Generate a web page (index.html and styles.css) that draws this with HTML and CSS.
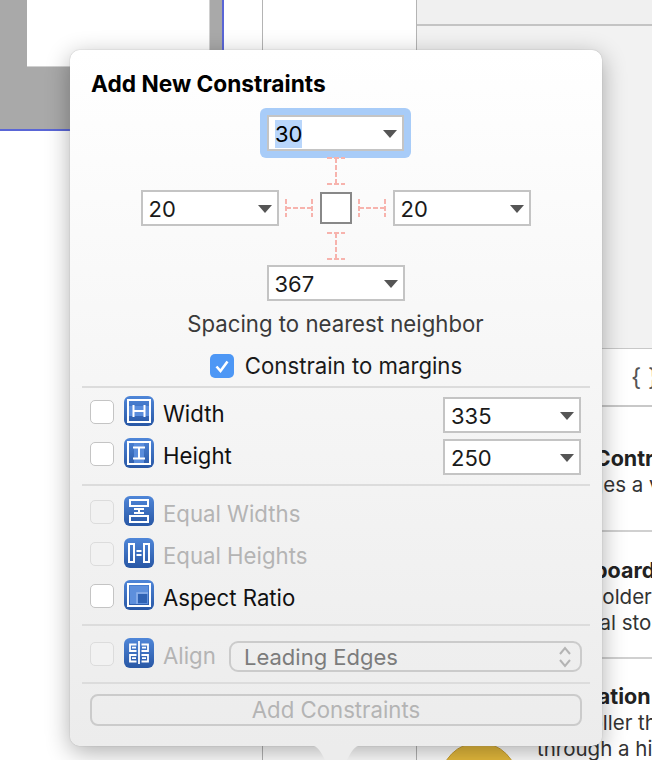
FILE: index.html
```html
<!DOCTYPE html>
<html lang="en">
<head>
<meta charset="utf-8">
<title>Add New Constraints</title>
<link rel="stylesheet" href="styles.css">
</head>
<body>
<div class="stage">
  <div class="canvas">
    <div class="scene"><div class="scene-view"></div></div>
  </div>
  <div class="outline"><div class="outline-pane"></div></div>
  <div class="inspector">
    <div class="tab-strip"></div>
    <div class="inspector-fill"></div>
    <div class="lib-tabs"><span class="braces">{ }</span></div>
    <div class="lib-row lib-row-a">
      <div class="lib-title">View Controller</div>
      <div class="lib-text">Manages a view</div>
    </div>
    <div class="lib-row lib-row-b">
      <div class="lib-title">Storyboard Ref</div>
      <div class="lib-text">Placeholder for a</div>
      <div class="lib-text">External storyboard</div>
    </div>
    <div class="lib-row lib-row-c">
      <div class="lib-title">Navigation</div>
      <div class="lib-text">Controller that</div>
      <div class="lib-text">through a hierarchy</div>
    </div>
  </div>
  <div class="coin"></div>

  <section class="popover">
    <h1 class="popover-title">Add New Constraints</h1>

    <div class="cross">
      <div class="focus-ring cross-top"><div class="field field-inner"><span class="sel">30</span><i class="caret"></i></div></div>
      <svg class="strut cross-s1" width="20" height="28" viewBox="0 0 20 28"><path d="M1 1H19M10 1V27M1 27H19" class="dash"/></svg>
      <div class="field cross-left"><span>20</span><i class="caret"></i></div>
      <svg class="strut cross-s2" width="28" height="20" viewBox="0 0 28 20"><path d="M1 1V19M1 10H27M27 1V19" class="dash"/></svg>
      <div class="box cross-mid"></div>
      <svg class="strut cross-s3" width="28" height="20" viewBox="0 0 28 20"><path d="M1 1V19M1 10H27M27 1V19" class="dash"/></svg>
      <div class="field cross-right"><span>20</span><i class="caret"></i></div>
      <svg class="strut cross-s4" width="20" height="28" viewBox="0 0 20 28"><path d="M1 1H19M10 1V27M1 27H19" class="dash"/></svg>
      <div class="field cross-bottom"><span>367</span><i class="caret"></i></div>
    </div>

    <p class="spacing-label">Spacing to nearest neighbor</p>
    <div class="margins">
      <span class="check check-on"><svg width="24" height="24" viewBox="0 0 24 24"><path d="M6.5 12.5L10.5 17L17.5 7.5" fill="none" stroke="#fff" stroke-width="2.6"/></svg></span>
      <span>Constrain to margins</span>
    </div>

    <hr class="rule rule-a">

    <div class="row row-width">
      <span class="check"></span>
      <svg class="glyph" viewBox="0 0 30 30"><use href="#tile"/><rect x="5" y="10" width="20" height="10" class="band"/><path d="M4 4H26V26H4Z M9.5 9V21 M20.5 9V21 M9.5 15H20.5" class="ink"/></svg>
      <span class="label">Width</span>
      <div class="field field-size"><span>335</span><i class="caret"></i></div>
    </div>
    <div class="row row-next">
      <span class="check"></span>
      <svg class="glyph" viewBox="0 0 30 30"><use href="#tile"/><rect x="10" y="5" width="10" height="20" class="band"/><path d="M4 4H26V26H4Z M9 9.5H21 M9 20.5H21 M15 9.5V20.5" class="ink"/></svg>
      <span class="label">Height</span>
      <div class="field field-size"><span>250</span><i class="caret"></i></div>
    </div>

    <hr class="rule rule-b">

    <div class="row row-opt">
      <span class="check check-off"></span>
      <svg class="glyph" viewBox="0 0 30 30"><use href="#tile"/><path d="M6 4H24V10H6Z M6 20H24V26H6Z M10 13H20 M10 17H20 M15 13V17" class="ink"/></svg>
      <span class="label label-off">Equal Widths</span>
    </div>
    <div class="row row-next">
      <span class="check check-off"></span>
      <svg class="glyph" viewBox="0 0 30 30"><use href="#tile"/><path d="M5 6H10V24H5Z M20 6H25V24H20Z M12.5 13H17.5 M12.5 17H17.5" class="ink"/></svg>
      <span class="label label-off">Equal Heights</span>
    </div>
    <div class="row row-next">
      <span class="check"></span>
      <svg class="glyph" viewBox="0 0 30 30"><use href="#tile"/><rect x="6" y="6" width="18" height="18" fill="#5d8fdc"/><rect x="14" y="14" width="9" height="9" fill="#2f62b3"/><path d="M13 24V13H24" fill="none" stroke="#8fb3ea" stroke-width="1.5"/><path d="M4 4H26V26H4Z" class="ink"/></svg>
      <span class="label">Aspect Ratio</span>
    </div>

    <hr class="rule rule-c">

    <div class="row row-align">
      <span class="check check-off"></span>
      <svg class="glyph" viewBox="0 0 30 30"><use href="#tile"/><path d="M15 3V26 M12.5 6.5H6V13H12.5 M8 9.7H12 M17.5 6.5H24V13H17.5 M18 9.7H22 M12.5 17H6V23.5H12.5 M8 20.2H12 M17.5 17H24V23.5H17.5 M18 20.2H22" class="ink-thin"/></svg>
      <span class="label label-off label-align">Align</span>
      <div class="select">
        <span>Leading Edges</span>
        <svg width="14" height="24" viewBox="0 0 14 24"><path d="M2 9L7 3L12 9M2 15L7 21L12 15" fill="none" stroke="#b4b4b4" stroke-width="2"/></svg>
      </div>
    </div>

    <hr class="rule rule-d">

    <div class="add-btn">Add Constraints</div>
  </section>
  <svg class="popover-tip" width="60" height="15" viewBox="0 0 60 15"><path d="M0 0H2C10 0 13 3 19 15H41C47 3 50 0 58 0H60Z" fill="#ececec"/></svg>

  <svg class="defs" width="0" height="0">
    <defs>
      <linearGradient id="tileFill" x1="0" y1="0" x2="0" y2="1">
        <stop offset="0" stop-color="#4f86d8"/>
        <stop offset="1" stop-color="#2857a5"/>
      </linearGradient>
      <symbol id="tile" viewBox="0 0 30 30"><rect width="30" height="30" rx="6" fill="url(#tileFill)"/></symbol>
    </defs>
  </svg>
</div>
</body>
</html>
```
FILE: styles.css
```css
* { box-sizing: border-box; }
html, body { margin: 0; padding: 0; }
body { font-family: Inter, Roboto, "Liberation Sans", sans-serif; color: #1a1a1a; background: #fff; }

.stage { position: relative; width: 652px; height: 760px; overflow: hidden; display: flex; background: #fff; }

.canvas { width: 224px; flex: none; }
.scene { height: 131px; background: #a9a9a9; padding-left: 27px; border-right: 2px solid #5a66d6; border-bottom: 2px solid #5a66d6; }
.scene-view { width: 183px; height: 67px; background: #fff; border-bottom: 1px solid #d0d0d0; border-right: 1px solid #d0d0d0; }

.outline { width: 193px; flex: none; padding-left: 38px; }
.outline-pane { height: 100%; border-left: 1px solid #b4b4b4; border-right: 1px solid #b4b4b4; }

.inspector { flex: 1; min-width: 0; display: flex; flex-direction: column; background: #fff; overflow: hidden; }
.tab-strip { height: 26px; flex: none; background: #f0f0f0; border-bottom: 2px solid #c4c4c4; }
.inspector-fill { height: 322px; flex: none; background: #f2f2f2; }
.lib-tabs { height: 59px; flex: none; background: #fff; border-top: 1px solid #c8c8c8; border-bottom: 2px solid #c8c8c8; padding-left: 214px; display: flex; align-items: center; }
.braces { font-size: 24px; color: #555; white-space: nowrap; }
.lib-row { flex: none; padding-left: 120px; white-space: nowrap; border-bottom: 2px solid #d0d0d0; }
.lib-row-a { height: 125px; padding-top: 38px; }
.lib-row-b { height: 127px; padding-top: 25px; }
.lib-row-c { flex: 1; padding-top: 24px; border-bottom: 0; }
.lib-title { font-size: 21.5px; font-weight: 700; line-height: 27px; color: #222; }
.lib-text { font-size: 20.5px; line-height: 26px; color: #333; }

.coin { position: absolute; left: 440px; top: 742px; width: 78px; height: 78px; border-radius: 50%; background: #e6bb3c; border: 1px solid #c99f2c; }

.popover { position: absolute; left: 70px; top: 50px; width: 532px; height: 696px; border-radius: 10px; background: linear-gradient(#ffffff, #ececec); box-shadow: 0 0 1px #8a8a8a, 0 6px 24px rgba(0,0,0,.32); padding: 0 12px; }
.popover-tip { position: absolute; left: 306px; top: 745px; }
.popover-title { margin: 0; padding: 21px 0 0 9px; font-size: 22.7px; line-height: 26px; font-weight: 700; color: #000; white-space: nowrap; }

.cross { display: grid; grid-template-columns: 138px 41px 32px 41px 138px; grid-template-rows: 36px 39px 36px 39px 36px; justify-content: center; justify-items: center; align-items: center; margin: 18px 0 0 -1px; }
.cross-top { grid-column: 2 / 5; grid-row: 1; }
.cross-s1 { grid-column: 3; grid-row: 2; }
.cross-left { grid-column: 1; grid-row: 3; }
.cross-s2 { grid-column: 2; grid-row: 3; }
.cross-mid { grid-column: 3; grid-row: 3; }
.cross-s3 { grid-column: 4; grid-row: 3; }
.cross-right { grid-column: 5; grid-row: 3; }
.cross-s4 { grid-column: 3; grid-row: 4; }
.cross-bottom { grid-column: 2 / 5; grid-row: 5; }

.field { width: 138px; height: 36px; background: #fff; border: 2px solid #c4c4c4; display: flex; align-items: center; justify-content: space-between; padding: 1px 5px 0 6px; font-size: 22px; color: #1a1a1a; flex: none; }
.focus-ring { width: 151px; height: 50px; padding: 7px; background: #a8ccf8; border-radius: 6px; }
.field-inner { width: 137px; }
.sel { background: #b9d6fb; padding: 0; line-height: 28px; color: #000; }
.caret { width: 0; height: 0; border-left: 7px solid transparent; border-right: 7px solid transparent; border-top: 8px solid #555; }
.box { width: 32px; height: 32px; background: #fff; border: 2px solid #888; }
.strut { display: block; }
.dash { fill: none; stroke: #f7b3ad; stroke-width: 2; stroke-dasharray: 5 2; }

.spacing-label { margin: 9px 0 0 -1px; font-size: 22.2px; line-height: 28px; text-align: center; color: #3a3a3a; }
.margins { display: flex; align-items: center; justify-content: center; gap: 11px; margin-top: 14px; font-size: 22.2px; line-height: 28px; color: #1a1a1a; height: 28px; }
.check { width: 24px; height: 24px; flex: none; border-radius: 5px; background: #fff; border: 1px solid #c4c4c4; display: block; }
.check svg { display: block; }
.check-on { background: #4d97f5; border: 0; }
.check-off { background: #f2f2f2; border-color: #dcdcdc; }

.rule { border: 0; height: 2px; background: #dcdcdc; margin: 0; }
.rule-a { margin-top: 6px; }
.rule-b { margin-top: 10px; }
.rule-c, .rule-d { margin-top: 8px; }
.row { display: flex; align-items: flex-start; padding-left: 8px; height: 36px; font-size: 22.2px; line-height: 36px; }
.row .check { margin-top: 4px; }
.row-width { margin-top: 8px; }
.row-next { margin-top: 6px; }
.row-opt { margin-top: 10px; }
.row-align { margin-top: 12px; }
.glyph { width: 30px; height: 30px; margin-left: 10px; flex: none; display: block; }
.band { fill: #5a8ddc; }
.ink { fill: none; stroke: #fff; stroke-width: 2; }
.ink-thin { fill: none; stroke: #fff; stroke-width: 1.8; }
.label { margin-left: 9px; color: #111; }
.label-off { color: #b4b4b4; }
.label-align { width: 66px; flex: none; }
.field-size { margin: 1px 9px 0 auto; }
.select { width: 353px; height: 31px; margin-top: 3px; border: 2px solid #cbcbcb; border-radius: 9px; display: flex; align-items: center; justify-content: space-between; padding: 0 8px 0 13px; color: #7c7c7c; font-size: 22px; }
.add-btn { width: 492px; height: 32px; margin: 10px 0 0 8px; border: 2px solid #cbcbcb; border-radius: 8px; text-align: center; font-size: 22.2px; line-height: 28px; color: #b4b4b4; }
.defs { position: absolute; }
```
